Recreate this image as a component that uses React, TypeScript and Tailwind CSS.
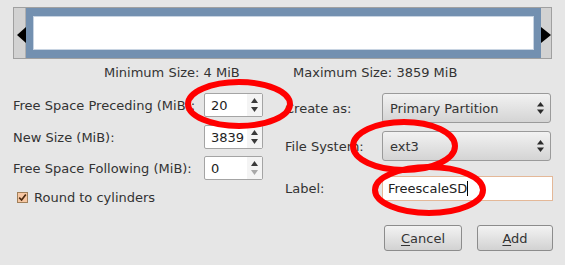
import React from "react";

function Spin({ value, dimDown }: { value: string; dimDown?: boolean }) {
  return (
    <div className="w-[59px] h-[24px] border border-[#a4a4a4] rounded-[2px] bg-white flex">
      <div className="flex-1 pl-[6px] flex items-center text-[#222]">{value}</div>
      <div className="w-[15px] bg-[#f4f4f4] flex flex-col items-center justify-center gap-[4px]">
        <svg width="7" height="5" viewBox="0 0 7 5"><path d="M3.5 0 L7 5 L0 5 Z" fill="#3a3a3a" /></svg>
        <svg width="7" height="5" viewBox="0 0 7 5"><path d="M0 0 L7 0 L3.5 5 Z" fill={dimDown ? "#a8a8a8" : "#3a3a3a"} /></svg>
      </div>
    </div>
  );
}

function Combo({ value }: { value: string }) {
  return (
    <div className="w-[169px] h-[30px] border border-[#9a9a9a] rounded-[3px] bg-gradient-to-b from-[#f2f2f2] to-[#d4d4d4] flex items-center justify-between pl-[7px] pr-[6px]">
      <span>{value}</span>
      <svg width="7" height="12" viewBox="0 0 7 12">
        <path d="M3.5 0 L7 4.5 L0 4.5 Z" fill="#2a2a2a" />
        <path d="M0 7.5 L7 7.5 L3.5 12 Z" fill="#2a2a2a" />
      </svg>
    </div>
  );
}

function Btn({ children, w }: { children: React.ReactNode; w: string }) {
  return (
    <div className={w + " h-[26px] border border-[#8c8c8c] rounded-[3px] bg-gradient-to-b from-[#f3f3f3] to-[#d2d2d2] flex items-center justify-center"}>
      {children}
    </div>
  );
}

export default function App() {
  return (
    <div className="relative w-[565px] h-[265px] overflow-hidden bg-[#e6e6e6] text-[13px] text-[#333] font-['DejaVu_Sans',sans-serif] leading-none">
      {/* resizer bar */}
      <div className="pt-[7px] pl-[13px]">
        <div className="w-[539px] h-[52px] border border-[#a0a0a0] flex">
          <div className="relative w-[12px] bg-[#d2d2d2] border-r border-[#b0b0b0]">
            <svg className="absolute left-[3px] top-[19px]" width="9" height="16" viewBox="0 0 9 16">
              <path d="M0 8 L9 0 L9 16 Z" fill="#000" />
            </svg>
          </div>
          <div className="flex-1 bg-[#7390b0] px-[7px] py-[8px]">
            <div className="w-full h-full bg-white border border-[#c8d4e2]" />
          </div>
          <div className="relative w-[10px] bg-[#d2d2d2]">
            <svg className="absolute left-0 top-[19px]" width="10" height="16" viewBox="0 0 10 16">
              <path d="M0 0 L10 8 L0 16 Z" fill="#000" />
            </svg>
          </div>
        </div>
      </div>

      {/* min/max labels */}
      <div className="flex pl-[104px] mt-[6px] h-[14px] items-center">
        <span className="w-[189px]">Minimum Size: 4 MiB</span>
        <span>Maximum Size: 3859 MiB</span>
      </div>

      {/* form */}
      <div className="flex mt-[14px]">
        <div className="w-[272px] pl-[13px] flex flex-col">
          <div className="flex items-center h-[24px] justify-between pr-[1px]">
            <span>Free Space Preceding (MiB):</span>
            <div className="mr-[8px]"><Spin value="20" /></div>
          </div>
          <div className="flex items-center h-[24px] mt-[8px] justify-between">
            <span>New Size (MiB):</span>
            <div className="mr-[9px]"><Spin value="3839" /></div>
          </div>
          <div className="flex items-center h-[24px] mt-[7px] justify-between">
            <span>Free Space Following (MiB):</span>
            <div className="mr-[9px]"><Spin value="0" dimDown /></div>
          </div>
          <div className="flex items-center mt-[11px] h-[12px] pl-[4px]">
            <div className="w-[11px] h-[11px] border border-[#a0805a] bg-[#f7c7a3] flex items-center justify-center">
              <svg width="9" height="9" viewBox="0 0 9 9"><path d="M1.2 4.6 L3.6 7 L7.8 1.6" stroke="#4a2a10" strokeWidth="1.7" fill="none" /></svg>
            </div>
            <span className="ml-[6px]">Round to cylinders</span>
          </div>
        </div>
        <div className="flex">
          <div className="flex flex-col w-[110px] pl-[13px]">
            <div className="h-[30px] flex items-center">Create as:</div>
            <div className="h-[30px] mt-[8px] flex items-center">File System:</div>
            <div className="h-[25px] mt-[15px] flex items-center">Label:</div>
          </div>
          <div className="flex flex-col">
            <Combo value="Primary Partition" />
            <div className="mt-[8px]"><Combo value="ext3" /></div>
            <div className="mt-[15px] w-[171px] h-[25px] border border-[#e4b898] bg-white flex items-center pl-[5px] text-[#222]">
              FreescaleSD<span className="inline-block w-[1px] h-[15px] bg-black" />
            </div>
          </div>
        </div>
      </div>

      {/* buttons */}
      <div className="flex justify-end gap-[15px] pr-[12px] mt-[22px]">
        <Btn w="w-[78px]"><span><span className="underline underline-offset-2">C</span>ancel</span></Btn>
        <Btn w="w-[76px]"><span><span className="underline underline-offset-2">A</span>dd</span></Btn>
      </div>

      {/* red annotation ellipses */}
      <svg className="absolute left-0 top-0 pointer-events-none" width="565" height="265" viewBox="0 0 565 265">
        <ellipse cx="239" cy="104" rx="51" ry="22" fill="none" stroke="#ff0000" strokeWidth="6" />
        <ellipse cx="404" cy="146" rx="51" ry="24" fill="none" stroke="#ff0000" strokeWidth="6" />
        <ellipse cx="429" cy="190" rx="54" ry="23" fill="none" stroke="#ff0000" strokeWidth="6" />
      </svg>
    </div>
  );
}
